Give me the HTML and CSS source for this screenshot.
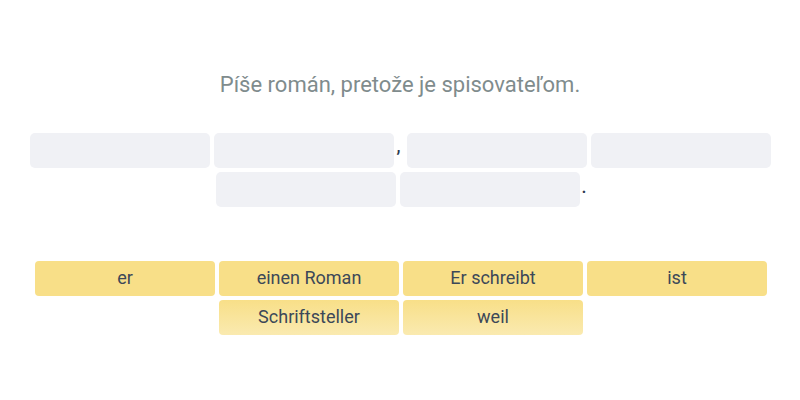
FILE: index.html
```html
<!DOCTYPE html>
<html>
<head>
<meta charset="utf-8">
<link rel="stylesheet" href="styles.css">
</head>
<body>
<div class="page">
  <p class="prompt">Píše román, pretože je spisovateľom.</p>
  <div class="answer">
    <div class="row">
      <div class="slot"></div>
      <div class="slot"></div>
      <span class="punct comma">,</span>
      <div class="slot"></div>
      <div class="slot"></div>
    </div>
    <div class="row">
      <div class="slot"></div>
      <div class="slot"></div>
      <span class="punct">.</span>
    </div>
  </div>
  <div class="bank">
    <div class="word">er</div>
    <div class="word">einen Roman</div>
    <div class="word">Er schreibt</div>
    <div class="word">ist</div>
    <div class="word faded">Schriftsteller</div>
    <div class="word faded">weil</div>
  </div>
</div>
</body>
</html>
```
FILE: styles.css
```css
html, body {
  margin: 0;
  padding: 0;
  background: #ffffff;
}
body {
  font-family: Roboto, "Noto Sans", sans-serif;
  width: 800px;
  height: 400px;
  overflow: hidden;
}
.page {
  padding-top: 70px;
}
.prompt {
  margin: 0;
  text-align: center;
  font-size: 22px;
  line-height: 30px;
  color: #7f8c8d;
}
.answer {
  margin-top: 31px;
  display: flex;
  flex-direction: column;
  align-items: center;
}
.row {
  display: flex;
  align-items: flex-end;
  justify-content: center;
}
.slot {
  width: 180px;
  height: 35px;
  margin: 2px;
  border-radius: 5px;
  background: #f0f1f5;
}
.punct {
  font-size: 18px;
  font-weight: 500;
  color: #2c3a4e;
  line-height: 20px;
  padding-bottom: 12px;
  width: 5px;
}
.comma {
  width: 9px;
  text-indent: 1px;
  padding-bottom: 14px;
}
.bank {
  margin: 52px auto 0;
  width: 736px;
  padding-left: 2px;
  display: flex;
  flex-wrap: wrap;
  justify-content: center;
  gap: 4px;
}
.word {
  width: 180px;
  height: 35px;
  box-sizing: border-box;
  padding-bottom: 2px;
  border-radius: 4px;
  background: #f8df88;
  color: #3c4858;
  font-size: 18px;
  display: flex;
  align-items: center;
  justify-content: center;
}
.faded {
  background: linear-gradient(180deg, #f8df88 0%, #faeab0 100%);
}
```
